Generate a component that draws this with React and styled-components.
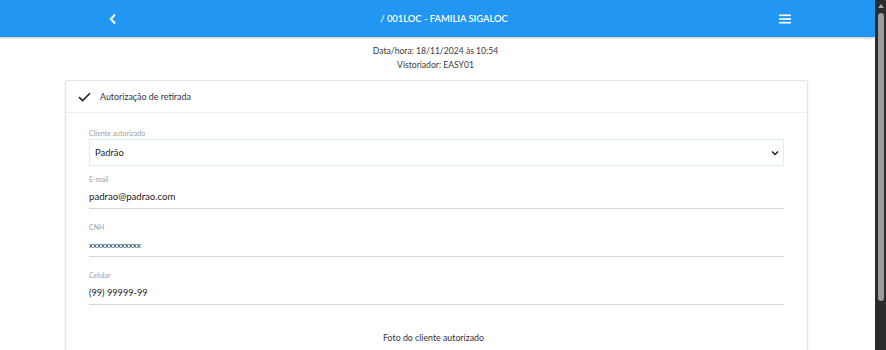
import React from 'react';
import styled, { createGlobalStyle } from 'styled-components';

const GlobalStyle = createGlobalStyle`
  html, body {
    margin: 0;
    padding: 0;
    height: 100%;
    overflow: hidden;
    background: #fff;
  }
  body {
    font-family: Lato, "Open Sans", Arial, sans-serif;
    color: #333;
  }
`;

const fields = [
  { label: 'E-mail', value: 'padrao@padrao.com', size: 9.6 },
  { label: 'CNH', value: 'xxxxxxxxxxxxx', size: 8 },
  { label: 'Celular', value: '(99) 99999-99', size: 9.2 },
];

const App = () => (
  <Shell>
    <GlobalStyle />
    <Page>
      <TopBar>
        <IconButton aria-label="voltar">
          <svg width="10" height="12" viewBox="0 0 10 12">
            <path d="M7 1.5 L2.8 6 L7 10.5" fill="none" stroke="#fff" strokeWidth="2" />
          </svg>
        </IconButton>
        <BarTitle>/ 001LOC - FAMILIA SIGALOC</BarTitle>
        <IconButton aria-label="menu">
          <svg width="12" height="10" viewBox="0 0 12 10">
            <rect x="0" y="0.5" width="12" height="1.6" fill="#fff" />
            <rect x="0" y="4.2" width="12" height="1.6" fill="#fff" />
            <rect x="0" y="7.9" width="12" height="1.6" fill="#fff" />
          </svg>
        </IconButton>
      </TopBar>

      <Info>
        <InfoLine>Data/hora: 18/11/2024 às 10:54</InfoLine>
        <InfoLine>Vistoriador: EASY01</InfoLine>
      </Info>

      <Card>
        <CardHeader>
          <svg width="13" height="10" viewBox="0 0 13 10">
            <path d="M1 5.2 L4.6 8.6 L12 1.2" fill="none" stroke="#222" strokeWidth="1.6" />
          </svg>
          <CardTitle>Autorização de retirada</CardTitle>
        </CardHeader>

        <Form>
          <Field $after={9}>
            <Label>Cliente autorizado</Label>
            <SelectBox>
              <span>Padrão</span>
              <svg width="8" height="6" viewBox="0 0 8 6">
                <path d="M1 1.5 L4 4.5 L7 1.5" fill="none" stroke="#222" strokeWidth="1.5" />
              </svg>
            </SelectBox>
          </Field>

          {fields.map((f) => (
            <Field key={f.label} $after={14}>
              <Label>{f.label}</Label>
              <LineInput $size={f.size}>{f.value}</LineInput>
            </Field>
          ))}

          <PhotoTitle>Foto do cliente autorizado</PhotoTitle>
        </Form>
      </Card>
    </Page>

    <Scrollbar>
      <ScrollArrow />
      <ScrollThumb />
    </Scrollbar>
  </Shell>
);

const Shell = styled.div`
  display: flex;
  height: 100vh;
`;

const Page = styled.div`
  flex: 1;
  min-width: 0;
  display: flex;
  flex-direction: column;
  overflow: hidden;
`;

const TopBar = styled.header`
  height: 37px;
  flex-shrink: 0;
  background: #2196f3;
  box-shadow: 0 1px 2px rgba(0, 0, 0, 0.25);
  display: flex;
  align-items: center;
  justify-content: space-between;
  padding: 0 81px 0 104px;
  color: #fff;
`;

const IconButton = styled.div`
  width: 18px;
  height: 18px;
  display: flex;
  align-items: center;
  justify-content: center;
`;

const BarTitle = styled.div`
  font-size: 9.4px;
  font-weight: 600;
  margin-left: -10px;
`;

const Info = styled.div`
  display: flex;
  flex-direction: column;
  align-items: center;
  padding-top: 7px;
  padding-right: 4px;
`;

const InfoLine = styled.div`
  font-size: 8.6px;
  line-height: 14px;
  color: #3a3a3a;
`;

const Card = styled.div`
  margin: 8px 67px 0 65px;
  border: 1px solid #e4e4e4;
  border-radius: 2px;
  box-shadow: 0 1px 3px rgba(0, 0, 0, 0.1);
  background: #fff;
  flex-shrink: 0;
`;

const CardHeader = styled.div`
  height: 31px;
  display: flex;
  align-items: center;
  gap: 9px;
  padding-left: 12px;
  border-bottom: 1px solid #eeeeee;
`;

const CardTitle = styled.div`
  font-size: 8.9px;
  color: #333;
`;

const Form = styled.div`
  display: flex;
  flex-direction: column;
  padding: 16px 23px 60px 23px;
`;

const Field = styled.div`
  display: flex;
  flex-direction: column;
  margin-bottom: ${(p) => p.$after}px;
`;

const Label = styled.div`
  font-size: 7px;
  line-height: 9px;
  color: #a0a0a0;
  margin-bottom: 1px;
`;

const SelectBox = styled.div`
  height: 25px;
  border: 1px solid #d9f0ee;
  display: flex;
  align-items: center;
  justify-content: space-between;
  padding: 0 4px 0 5px;
  font-size: 9.4px;
  color: #222;
`;

const LineInput = styled.div`
  height: 23px;
  display: flex;
  align-items: center;
  border-bottom: 1px solid #d6d6d6;
  font-size: ${(p) => p.$size}px;
  color: #222;
`;

const PhotoTitle = styled.div`
  text-align: center;
  font-size: 8.8px;
  color: #333;
  margin-top: 13px;
  padding-right: 6px;
`;

const Scrollbar = styled.div`
  width: 11px;
  flex-shrink: 0;
  background: #2b2b2b;
  display: flex;
  flex-direction: column;
  align-items: center;
  padding-top: 4px;
`;

const ScrollArrow = styled.div`
  width: 0;
  height: 0;
  border-left: 3px solid transparent;
  border-right: 3px solid transparent;
  border-bottom: 4px solid #a3a3a3;
`;

const ScrollThumb = styled.div`
  width: 6px;
  height: 288px;
  margin-top: 5px;
  background: #9b9b9b;
  border-radius: 3px;
`;

export default App;
